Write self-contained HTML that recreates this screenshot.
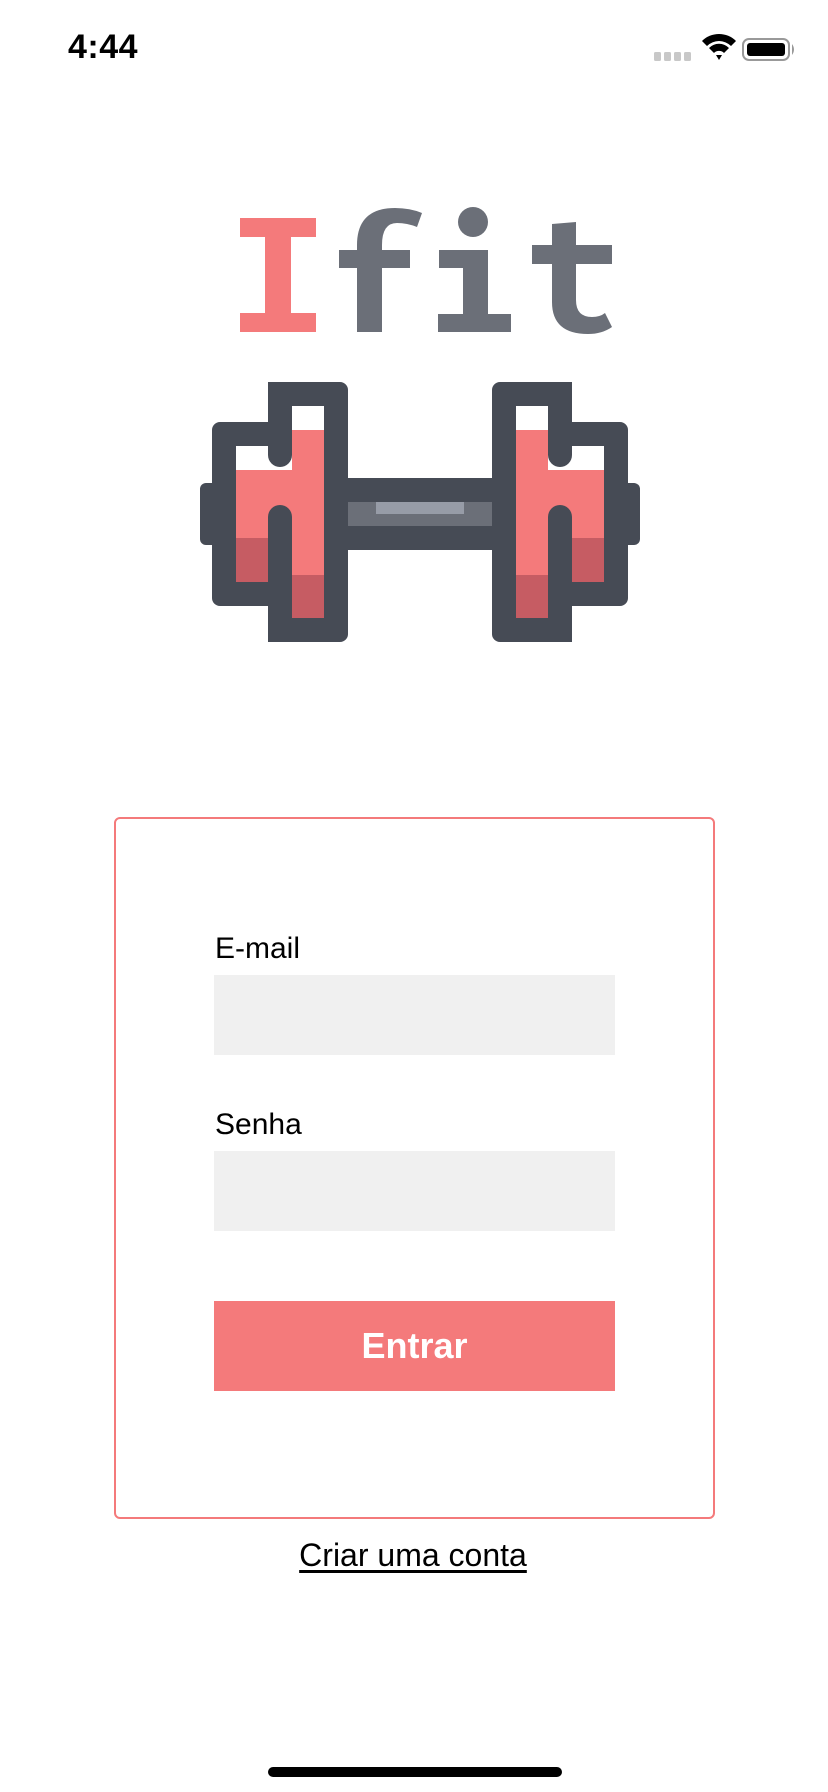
<!DOCTYPE html>
<html><head><meta charset="utf-8"><style>
html,body{margin:0;padding:0;background:#fff;width:828px;height:1792px;overflow:hidden;font-family:"Liberation Sans",sans-serif;}
.abs{position:absolute;}
</style></head><body>
<div class="abs" style="left:68px;top:28px;font-size:34px;font-weight:bold;color:#000;letter-spacing:0.5px">4:44</div>
<svg class="abs" style="left:0;top:0" width="828" height="100">
<g fill="#c8c8c8"><rect x="654" y="52" width="7" height="9" rx="1.5"/><rect x="664" y="52" width="7" height="9" rx="1.5"/><rect x="674" y="52" width="7" height="9" rx="1.5"/><rect x="684" y="52" width="7" height="9" rx="1.5"/></g>
<path d="M702 41 A24 24 0 0 1 736 41 L731 46 A17 17 0 0 0 707 46 Z M709 48 A14 14 0 0 1 729 48 L724 53 A7 7 0 0 0 714 53 Z M716 55 L722 55 L719 60 Z" fill="#000"/>
<rect x="743" y="39" width="46" height="21" rx="6" fill="none" stroke="#999" stroke-width="2"/>
<rect x="747" y="43" width="38" height="13" rx="3" fill="#000"/>
<path d="M792 44 Q796 49.5 792 55 Z" fill="#999"/>
</svg>
<svg class="abs" style="left:0;top:0" width="828" height="700">
<g fill="#f47a7b"><rect x="240" y="218" width="76" height="19"/><rect x="240" y="313" width="76" height="19"/><rect x="265" y="218" width="26" height="114"/></g>
<g fill="#6b6f78">
<path d="M357 332 V245 Q357 208 395 208 Q410 208 422 213 L417 227 Q407 223 397 223 Q382 223 382 245 V332 Z"/>
<rect x="339" y="250" width="71" height="18"/>
<circle cx="473" cy="222" r="15"/>
<rect x="439" y="250" width="49" height="18"/><rect x="463" y="250" width="25" height="82"/><rect x="438" y="314" width="73" height="18"/>
<path d="M552 224 L576 222 V300 Q576 317 592 317 Q600 317 605 313 L612 327 Q602 334 588 334 Q552 334 552 302 Z"/>
<rect x="532" y="245" width="80" height="19"/>
</g>
<g id="half">
<rect x="200" y="483" width="18" height="62" rx="6" fill="#464b55"/>
<rect x="212" y="422" width="80" height="184" rx="8" fill="#464b55"/>
<rect x="268" y="382" width="80" height="260" rx="8" fill="#464b55"/>
<rect x="236" y="446" width="88" height="136" fill="#fff"/>
<rect x="236" y="470" width="88" height="68" fill="#f47a7b"/>
<rect x="236" y="538" width="88" height="44" fill="#c65c63"/>
<rect x="292" y="406" width="32" height="212" fill="#fff"/>
<rect x="292" y="430" width="32" height="145" fill="#f47a7b"/>
<rect x="292" y="575" width="32" height="43" fill="#c65c63"/>
<rect x="268" y="470" width="24" height="68" fill="#f47a7b"/>
<rect x="268" y="538" width="24" height="44" fill="#c65c63"/>
<path d="M268 382 H292 V455 A12 12 0 0 1 268 455 Z" fill="#464b55"/>
<path d="M268 642 H292 V517 A12 12 0 0 0 268 517 Z" fill="#464b55"/>
<rect x="348" y="478" width="80" height="72" fill="#464b55"/>
<rect x="348" y="502" width="80" height="24" fill="#6b6f78"/>
<rect x="376" y="502" width="52" height="12" fill="#979ca7"/>
</g>
<use href="#half" transform="translate(840,0) scale(-1,1)"/>
</svg>
<div class="abs" style="left:114px;top:817px;width:597px;height:698px;border:2px solid #f47a7b;border-radius:6px"></div>
<div class="abs" style="left:215px;top:932px;font-size:30px;color:#000">E-mail</div>
<div class="abs" style="left:214px;top:975px;width:401px;height:80px;background:#f0f0f0"></div>
<div class="abs" style="left:215px;top:1108px;font-size:30px;color:#000">Senha</div>
<div class="abs" style="left:214px;top:1151px;width:401px;height:80px;background:#f0f0f0"></div>
<div class="abs" style="left:214px;top:1301px;width:401px;height:90px;background:#f47a7b;color:#fff;font-weight:bold;font-size:36px;line-height:90px;text-align:center">Entrar</div>
<div class="abs" style="left:0;width:826px;top:1537px;text-align:center;font-size:32px;color:#000;text-decoration:underline;text-underline-offset:4px">Criar uma conta</div>
<div class="abs" style="left:268px;top:1767px;width:294px;height:10px;border-radius:5px;background:#000"></div>
</body></html>
